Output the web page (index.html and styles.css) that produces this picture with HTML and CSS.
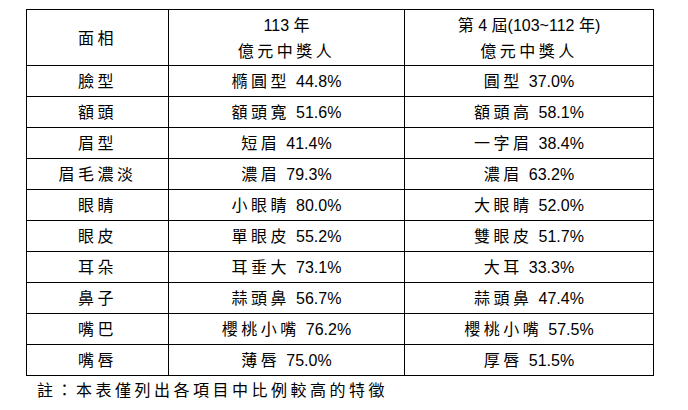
FILE: index.html
```html
<!DOCTYPE html>
<html lang="zh-Hant">
<head>
<meta charset="utf-8">
<link rel="stylesheet" href="styles.css">
</head>
<body>
<div class="page">
<table class="grid">
  <colgroup>
    <col class="c1"><col class="c2"><col class="c3">
  </colgroup>
  <thead>
    <tr class="head">
      <th><span class="cj">面相</span></th>
      <th>113 <span class="cs">年</span><br><span class="cj">億元中獎人</span></th>
      <th><span class="cs">第</span> 4 <span class="cs">屆</span>(103~112 <span class="cs">年</span>)<br><span class="cj">億元中獎人</span></th>
    </tr>
  </thead>
  <tbody>
    <tr><td><span class="cj">臉型</span></td><td><span class="cj v">橢圓型</span>44.8%</td><td><span class="cj v">圓型</span>37.0%</td></tr>
    <tr><td><span class="cj">額頭</span></td><td><span class="cj v">額頭寬</span>51.6%</td><td><span class="cj v">額頭高</span>58.1%</td></tr>
    <tr><td><span class="cj">眉型</span></td><td><span class="cj v">短眉</span>41.4%</td><td><span class="cj v">一字眉</span>38.4%</td></tr>
    <tr><td><span class="cj">眉毛濃淡</span></td><td><span class="cj v">濃眉</span>79.3%</td><td><span class="cj v">濃眉</span>63.2%</td></tr>
    <tr><td><span class="cj">眼睛</span></td><td><span class="cj v">小眼睛</span>80.0%</td><td><span class="cj v">大眼睛</span>52.0%</td></tr>
    <tr><td><span class="cj">眼皮</span></td><td><span class="cj v">單眼皮</span>55.2%</td><td><span class="cj v">雙眼皮</span>51.7%</td></tr>
    <tr><td><span class="cj">耳朵</span></td><td><span class="cj v">耳垂大</span>73.1%</td><td><span class="cj v">大耳</span>33.3%</td></tr>
    <tr><td><span class="cj">鼻子</span></td><td><span class="cj v">蒜頭鼻</span>56.7%</td><td><span class="cj v">蒜頭鼻</span>47.4%</td></tr>
    <tr><td><span class="cj">嘴巴</span></td><td><span class="cj v">櫻桃小嘴</span>76.2%</td><td><span class="cj v">櫻桃小嘴</span>57.5%</td></tr>
    <tr><td><span class="cj">嘴唇</span></td><td><span class="cj v">薄唇</span>75.0%</td><td><span class="cj v">厚唇</span>51.5%</td></tr>
  </tbody>
</table>
<p class="note"><span class="cj">註：本表僅列出各項目中比例較高的特徵</span></p>
</div>
</body>
</html>
```

FILE: styles.css
```css
html, body {
  margin: 0;
  padding: 0;
  background: #fff;
}
body {
  font-family: "Liberation Sans", "Noto Sans CJK TC", sans-serif;
  font-size: 16px;
  color: #000;
}
.page {
  padding: 9px 0 0 26px;
}
.grid {
  border-collapse: collapse;
  table-layout: fixed;
  width: 627px;
}
.c1 { width: 142px; }
.c2 { width: 236px; }
.c3 { width: 249px; }
.grid th, .grid td {
  border: 1px solid #000;
  text-align: center;
  font-weight: normal;
  padding: 0;
  white-space: nowrap;
}
.grid td {
  height: 29px;
  line-height: 29px;
}
.grid th {
  height: 55px;
  line-height: 25px;
}
.cj {
  font-family: "Noto Sans CJK TC", sans-serif;
  letter-spacing: 3.5px;
}
.cs {
  font-family: "Noto Sans CJK TC", sans-serif;
}
.v {
  margin-right: 6px;
}
.note {
  margin: 2px 0 0 11px;
  line-height: 22px;
}
```
